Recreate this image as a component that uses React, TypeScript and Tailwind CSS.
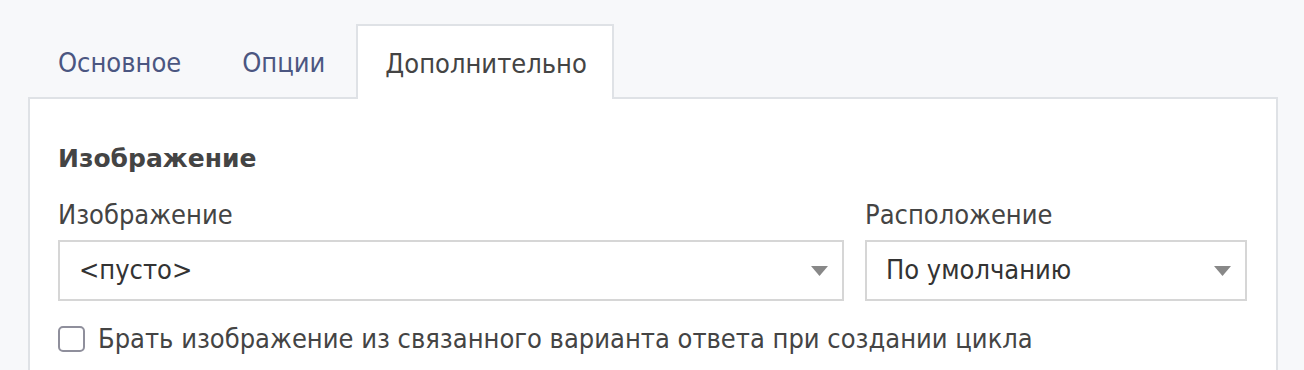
export default function App() {
  return (
    <div className="h-[370px] overflow-hidden bg-[#f7f8fa] pl-[28px] pr-[26px] pt-[24px] font-['DejaVu_Sans_Condensed','DejaVu_Sans',sans-serif] text-[27px] text-[#444]">
      {/* tabs */}
      <div className="flex items-end">
        <div className="h-[73px] flex items-center pt-[6px] px-[28px] border-2 border-transparent text-[#4b5681]">
          Основное
        </div>
        <div className="h-[73px] flex items-center pt-[6px] px-[29px] border-2 border-transparent text-[#4b5681]">
          Опции
        </div>
        <div className="relative z-10 -mb-[2px] h-[75px] flex items-center pt-[4px] pl-[27px] pr-[25px] border-2 border-b-0 border-[#dfe2e6] bg-white text-[#444]">
          Дополнительно
        </div>
      </div>
      {/* panel */}
      <div className="h-[300px] border-2 border-[#dfe2e6] bg-white pl-[28px] pr-[29px] pt-[42px]">
        <div className="font-['DejaVu_Sans',sans-serif] font-bold text-[25px] leading-[36px]">
          Изображение
        </div>
        <div className="mt-[20px] grid grid-cols-[1fr_382px] gap-x-[21px]">
          <div>
            <div className="leading-[36px] mb-[7px]">Изображение</div>
            <Select value="<пусто>" />
          </div>
          <div>
            <div className="leading-[36px] mb-[7px]">Расположение</div>
            <Select value="По умолчанию" />
          </div>
        </div>
        <label className="mt-[21px] flex items-center gap-[13px]">
          <span className="w-[27px] h-[26px] rounded-[5px] border-2 border-[#8f8f9c] bg-white" />
          <span className="leading-[34px]">
            Брать изображение из связанного варианта ответа при создании цикла
          </span>
        </label>
      </div>
    </div>
  );
}

function Select({ value }: { value: string }) {
  return (
    <div className="h-[61px] flex items-center justify-between border-2 border-[#d6d6d6] bg-white pl-[19px] pr-[12px] text-[#333]">
      <span>{value}</span>
      <svg width="17" height="10" viewBox="0 0 17 10" className="mr-[2px]">
        <path d="M0 0 H17 L8.5 10 Z" fill="#888" />
      </svg>
    </div>
  );
}
